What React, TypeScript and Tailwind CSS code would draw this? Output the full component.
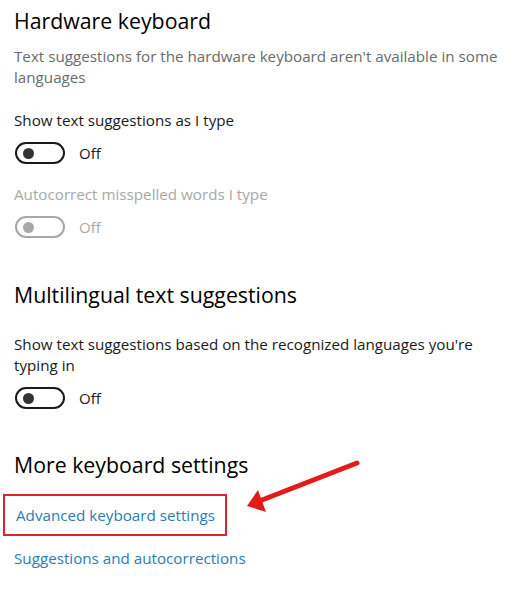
function Toggle({ disabled }: { disabled?: boolean }) {
  const c = disabled ? "border-[#a8a8a8]" : "border-[#1a1a1a]";
  const k = disabled ? "bg-[#a8a8a8]" : "bg-[#333333]";
  return (
    <div className="flex items-center h-[22px]">
      <div className={`w-[50px] h-[22px] rounded-full border-2 ${c} flex items-center pl-[6px]`}>
        <div className={`w-[11px] h-[11px] rounded-full ${k}`} />
      </div>
      <span className={`ml-[14px] text-[15px] ${disabled ? "text-[#a8a8a8]" : "text-[#1a1a1a]"}`}>Off</span>
    </div>
  );
}

export default function App() {
  return (
    <div
      className="relative w-[518px] h-[600px] bg-white overflow-hidden text-[#1a1a1a]"
      style={{ fontFamily: '"Open Sans", "Noto Sans", sans-serif' }}
    >
      <div className="flex flex-col pl-[14px] pt-[6px]">
        <h2 className="text-[21.3px] leading-[30px] font-normal text-black">Hardware keyboard</h2>
        <p className="mt-[10px] text-[15.2px] leading-[21px] text-[#6b6b6b] w-[504px]">
          Text suggestions for the hardware keyboard aren't available in some languages
        </p>
        <p className="mt-[22px] text-[15.2px] leading-[21px]">Show text suggestions as I type</p>
        <div className="mt-[11px] pl-[1px]">
          <Toggle />
        </div>
        <p className="mt-[20px] text-[15.2px] leading-[21px] text-[#a8a8a8]">Autocorrect misspelled words I type</p>
        <div className="mt-[11px] pl-[1px]">
          <Toggle disabled />
        </div>

        <h2 className="mt-[42px] text-[21.3px] leading-[30px] font-normal text-black">Multilingual text suggestions</h2>
        <p className="mt-[24px] text-[15.2px] leading-[21px] w-[480px]">
          Show text suggestions based on the recognized languages you're typing in
        </p>
        <div className="mt-[11px] pl-[1px]">
          <Toggle />
        </div>

        <h2 className="mt-[41px] text-[21.3px] leading-[30px] font-normal text-black">More keyboard settings</h2>
        <div className="mt-[14px] -ml-[11px] w-[224px] h-[42px] border-2 border-[#d9262c] flex items-center pl-[11px]">
          <span className="text-[15.2px] text-[#2b7cb5]">Advanced keyboard settings</span>
        </div>
        <p className="mt-[12px] text-[15.2px] leading-[21px] text-[#2b7cb5]">Suggestions and autocorrections</p>
      </div>

      <svg className="absolute left-0 top-0" width="518" height="600" viewBox="0 0 518 600">
        <line x1="357" y1="463" x2="262" y2="500" stroke="#e31b1b" strokeWidth="5" strokeLinecap="round" />
        <polygon points="247,506 258,490 266,512" fill="#e31b1b" />
      </svg>
    </div>
  );
}
